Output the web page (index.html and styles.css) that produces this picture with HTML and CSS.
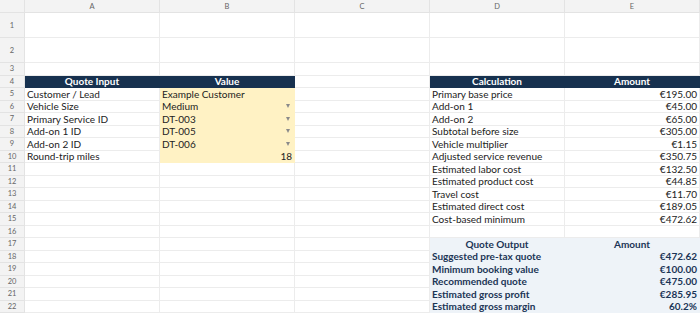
FILE: index.html
```html
<!DOCTYPE html>
<html>
<head>
<meta charset="utf-8">
<link rel="stylesheet" href="styles.css">
</head>
<body>
<div class="sheet">
  <div class="corner"></div><div class="ch">A</div><div class="ch">B</div><div class="ch">C</div><div class="ch">D</div><div class="ch">E</div>

  <div class="rh">1</div><div class="c"></div><div class="c"></div><div class="c"></div><div class="c"></div><div class="c"></div>
  <div class="rh">2</div><div class="c"></div><div class="c"></div><div class="c"></div><div class="c"></div><div class="c"></div>
  <div class="rh">3</div><div class="c"></div><div class="c"></div><div class="c"></div><div class="c"></div><div class="c"></div>

  <div class="rh">4</div><div class="c hd">Quote Input</div><div class="c hd">Value</div><div class="c"></div><div class="c hd">Calculation</div><div class="c hd">Amount</div>

  <div class="rh">5</div><div class="c">Customer / Lead</div><div class="c in">Example Customer</div><div class="c"></div><div class="c">Primary base price</div><div class="c num">€195.00</div>
  <div class="rh">6</div><div class="c">Vehicle Size</div><div class="c in dd">Medium<span class="tri"></span></div><div class="c"></div><div class="c">Add-on 1</div><div class="c num">€45.00</div>
  <div class="rh">7</div><div class="c">Primary Service ID</div><div class="c in dd">DT-003<span class="tri"></span></div><div class="c"></div><div class="c">Add-on 2</div><div class="c num">€65.00</div>
  <div class="rh">8</div><div class="c">Add-on 1 ID</div><div class="c in dd">DT-005<span class="tri"></span></div><div class="c"></div><div class="c">Subtotal before size</div><div class="c num">€305.00</div>
  <div class="rh">9</div><div class="c">Add-on 2 ID</div><div class="c in dd">DT-006<span class="tri"></span></div><div class="c"></div><div class="c">Vehicle multiplier</div><div class="c num">€1.15</div>
  <div class="rh">10</div><div class="c">Round-trip miles</div><div class="c in num">18</div><div class="c"></div><div class="c">Adjusted service revenue</div><div class="c num">€350.75</div>
  <div class="rh">11</div><div class="c"></div><div class="c"></div><div class="c"></div><div class="c">Estimated labor cost</div><div class="c num">€132.50</div>
  <div class="rh">12</div><div class="c"></div><div class="c"></div><div class="c"></div><div class="c">Estimated product cost</div><div class="c num">€44.85</div>
  <div class="rh">13</div><div class="c"></div><div class="c"></div><div class="c"></div><div class="c">Travel cost</div><div class="c num">€11.70</div>
  <div class="rh">14</div><div class="c"></div><div class="c"></div><div class="c"></div><div class="c">Estimated direct cost</div><div class="c num">€189.05</div>
  <div class="rh">15</div><div class="c"></div><div class="c"></div><div class="c"></div><div class="c">Cost-based minimum</div><div class="c num">€472.62</div>
  <div class="rh">16</div><div class="c"></div><div class="c"></div><div class="c"></div><div class="c"></div><div class="c"></div>

  <div class="rh">17</div><div class="c"></div><div class="c"></div><div class="c"></div><div class="c out ctr">Quote Output</div><div class="c out ctr">Amount</div>
  <div class="rh">18</div><div class="c"></div><div class="c"></div><div class="c"></div><div class="c out">Suggested pre-tax quote</div><div class="c out num">€472.62</div>
  <div class="rh">19</div><div class="c"></div><div class="c"></div><div class="c"></div><div class="c out">Minimum booking value</div><div class="c out num">€100.00</div>
  <div class="rh">20</div><div class="c"></div><div class="c"></div><div class="c"></div><div class="c out">Recommended quote</div><div class="c out num">€475.00</div>
  <div class="rh">21</div><div class="c"></div><div class="c"></div><div class="c"></div><div class="c out">Estimated gross profit</div><div class="c out num">€285.95</div>
  <div class="rh">22</div><div class="c"></div><div class="c"></div><div class="c"></div><div class="c out">Estimated gross margin</div><div class="c out num">60.2%</div>
</div>
</body>
</html>
```

FILE: styles.css
```css
html, body {
  margin: 0;
  padding: 0;
  background: #ffffff;
}
.sheet {
  display: grid;
  grid-template-columns: 25px repeat(5, 135px);
  grid-template-rows: 13px 25px 25px 12.5px repeat(19, 12.5px);
  width: 700px;
  height: 314px;
  overflow: hidden;
  font-family: Lato, "Liberation Sans", sans-serif;
  font-size: 10px;
  color: #222;
}
.corner, .ch, .rh {
  background: #f3f3f3;
  color: #666;
  font-size: 7.5px;
  display: flex;
  align-items: center;
  justify-content: center;
  box-sizing: border-box;
  border-right: 1px solid #e3e3e3;
  border-bottom: 1px solid #e3e3e3;
}
.c {
  box-sizing: border-box;
  border-right: 1px solid #ececec;
  border-bottom: 1px solid #ececec;
  display: flex;
  align-items: center;
  padding: 0 2px;
  white-space: nowrap;
  overflow: hidden;
  line-height: 1;
  position: relative;
}
.hd {
  background: #17314f;
  border-color: #17314f;
  color: #ffffff;
  font-weight: bold;
  justify-content: center;
}
.in {
  background: #fff2c4;
  border-color: #fff2c4;
}
.num {
  justify-content: flex-end;
}
.dd {
  justify-content: space-between;
}
.tri {
  width: 0;
  height: 0;
  border-left: 2.5px solid transparent;
  border-right: 2.5px solid transparent;
  border-top: 4px solid #8a8a8a;
  margin-right: 2px;
}
.out {
  background: #eef3f8;
  border-color: #eef3f8;
  color: #1b3556;
  font-weight: bold;
}
.ctr {
  justify-content: center;
}
```
